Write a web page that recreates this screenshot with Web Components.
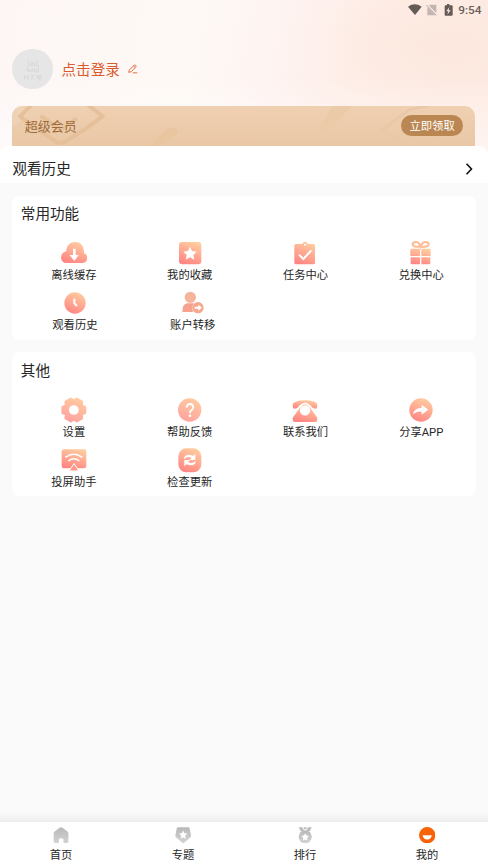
<!DOCTYPE html>
<html lang="zh-CN">
<head>
<meta charset="utf-8">
<title>我的</title>
<style>
html,body{margin:0;height:100%}
body{font-family:Roboto,"Noto Sans CJK SC",sans-serif;color:#262626;background:#fafafa;overflow:hidden}
</style>
</head>
<body>
<app-shell>
  <profile-header>
    <status-bar slot="status">9:54</status-bar>
    <user-row>点击登录</user-row>
    <vip-card action="立即领取">超级会员</vip-card>
  </profile-header>
  <history-row>观看历史</history-row>
  <menu-panel heading="常用功能">
    <menu-item icon="cloud">离线缓存</menu-item>
    <menu-item icon="star">我的收藏</menu-item>
    <menu-item icon="task">任务中心</menu-item>
    <menu-item icon="gift">兑换中心</menu-item>
    <menu-item icon="clock" style="margin-left:2px">观看历史</menu-item>
    <menu-item icon="transfer" style="margin-left:6px">账户转移</menu-item>
  </menu-panel>
  <menu-panel heading="其他">
    <menu-item icon="gear">设置</menu-item>
    <menu-item icon="help">帮助反馈</menu-item>
    <menu-item icon="phone">联系我们</menu-item>
    <menu-item icon="share">分享APP</menu-item>
    <menu-item icon="cast">投屏助手</menu-item>
    <menu-item icon="update">检查更新</menu-item>
  </menu-panel>
  <tab-bar slot="tabs">
    <tab-item icon="home">首页</tab-item>
    <tab-item icon="topic">专题</tab-item>
    <tab-item icon="rank">排行</tab-item>
    <tab-item icon="mine">我的</tab-item>
  </tab-bar>
</app-shell>
<script>
function define(name, render) {
  customElements.define(name, class extends HTMLElement {
    constructor() {
      super();
      this.attachShadow({ mode: 'open' });
    }
    connectedCallback() {
      this.shadowRoot.innerHTML = render(this);
    }
  });
}

define('app-shell', () => `
<style>
:host{display:flex;flex-direction:column;height:867px;width:488px;background:#fafafa}
main{flex:1;min-height:0;display:flex;flex-direction:column}
</style><main><slot></slot></main><slot name="tabs"></slot>`);

define('profile-header', () => `
<style>
:host{display:flex;flex-direction:column;height:154px;margin-bottom:-8px;flex:none;
background:linear-gradient(180deg,transparent 50%,rgba(255,255,255,.5)),
radial-gradient(ellipse 130px 80px at 445px 45px,#fce8de,transparent),
linear-gradient(100deg,#fdf6f5 0%,#fef9f5 38%,#fef4f2 54%,#feeee8 70%,#feebe4 100%)}
</style><slot name="status"></slot><slot></slot>`);

define('status-bar', () => `
<style>
:host{display:flex;height:20px;align-items:center;justify-content:flex-end;padding-right:6.5px;font:500 11.8px/20px Roboto,sans-serif;color:#6b605c}
svg{margin-right:4.6px;margin-top:-1px}
</style>
<svg width="46" height="14" viewBox="0 0 138 42"><path d="M0 11Q20-3 41 11L21 36Z" fill="#645b57"/>
<path d="M64 5h21v25L64 9ZM58 12l25 25H58Z" fill="#c3b6b1"/><path d="m55 6 30 31" stroke="#b9aca7" stroke-width="3"/>
<path d="M117 3h7v4h7q3 0 3 3v25q0 3-3 3h-18q-3 0-3-3V10q0-3 3-3h4Z" fill="#645b57"/><path d="m124 12-9 13h6l-3 10 10-13h-6Z" fill="#fbe9e3"/></svg><slot></slot>`);

define('user-row', () => `
<style>
:host{display:flex;align-items:center;height:41px;margin-top:28.5px;padding-left:12.4px;color:#dc5b2e;font-size:14.6px;line-height:20px}
.avatar{width:40.5px;height:40.5px;border-radius:50%;background:#e6e6e6;margin-right:8.6px;flex:none}
.edit{margin-left:8px}
span{padding-top:1.4px}
</style>
<svg class="avatar" viewBox="0 0 122 122" fill="none" stroke="#d6d6d6" stroke-width="2.5">
<path d="m47 34 4 11h24l4-11M56 35l7 9 7-9M46 49h34v7M46 54v14M48 58l4 11 4-8 4 8 4-11M68 58v11h6V58M79 56v14M38 79v14M43 82l-7 5M47 79v14M47 85l5 2M56 80h12M62 80l-5 13M61 86l7 6M74 80h14v5H74ZM78 88h7v7M81 85v11"/></svg>
<span><slot></slot></span>
<svg class="edit" width="10" height="10" viewBox="0 0 30 30" fill="none" stroke="#e0673d" stroke-width="2.8"><path d="m4 18 15-15q2-1 4 1t1 4L10 23l-8 2ZM16 6l6 5M14 26.5h14"/></svg>`);

define('vip-card', el => `
<style>
:host{display:flex;position:relative;overflow:hidden;align-items:center;justify-content:space-between;box-sizing:border-box;height:41px;margin:16.3px 12.6px 0 12.4px;padding:0 12.3px;border-radius:10px 10px 0 0;background:linear-gradient(180deg,#efd0b1,#e9c7a6);color:#9b6b3b;font-size:13px;line-height:18px}
.art{position:absolute;inset:0}
span{position:relative;margin-top:1px}
b{position:relative;box-sizing:border-box;font-weight:400;font-size:11.3px;line-height:20px;height:20.6px;padding:1.4px 8.4px 0;border-radius:11px;background:#ba8752;color:#fff;margin-top:-1.4px}
</style>
<svg class="art" width="463" height="41" viewBox="0 0 1389 123" fill="none" stroke-linecap="round" stroke-linejoin="round">
<path d="M0 0h70L20 50 0 60Z" fill="#f0d5bb" opacity=".6"/>
<path d="M70-14 24 31q44 34 108 76 14 8 28 0 60-36 112-76L214-14M90 33l50 33q8 4 16 0l34-26" stroke="#e5c09a" stroke-width="12"/>
<path d="m410 123 46-48q20-16 40-6 8 9-12 23l-44 31Z" fill="#e9c6a0"/>
<path d="m918 65 45-65h56l-60 65q-25 18-41 0" fill="#ebcaa8"/>
<path d="m1250-2-58 13-80 60 90 62M1230 45l-60 29 60 40 90-45" stroke="#e8c8a7" stroke-width="8"/>
</svg><span><slot></slot></span><b>${el.getAttribute('action')}</b>`);

define('history-row', () => `
<style>
:host{display:flex;position:relative;flex:none;box-sizing:border-box;height:37px;align-items:center;justify-content:space-between;background:#fff;border-radius:9px 9px 0 0;padding:9px 15px 0 12.4px;font-size:14.6px;line-height:20px}
</style><slot></slot><svg width="8" height="12" viewBox="0 0 8 12" fill="none" stroke="#111" stroke-width="1.6"><path d="m1.5.8 5 5.2-5 5.2"/></svg>`);

define('menu-panel', el => `
<style>
:host{display:flex;flex-direction:column;flex:none;box-sizing:border-box;height:144.2px;margin:12.5px 12.5px 0 12.4px;padding-top:8.6px;background:#fff;border-radius:8px}
:host(:last-of-type){padding-top:9.1px}
h2{font-size:14.6px;line-height:20px;font-weight:400;margin:0 0 15.9px 8.4px}
.grid{display:grid;grid-template-columns:repeat(4,115.8px);row-gap:7.4px;margin-left:3.6px}
</style><h2>${el.getAttribute('heading')}</h2><div class="grid"><slot></slot></div>`);

/* Menu glyphs are drawn on a 78-unit square; "F" and "G" stand for the strong and soft warm gradients. */
const ICONS = {
  cloud: `<path d="M17 69Q1 68 0 53q0-14 15-19Q17 8 41 6q26 0 28 28v6q9 2 10 13 0 14-13 16Z" fill="F"/><path d="M36 26h8v19h9L40 63 26 45h10Z" fill="#fff"/>`,
  star: `<rect x="6" y="6" width="67" height="67" rx="10" fill="F"/><path d="m39 20 6 13 14 2-10 10 3 14-13-7-13 7 3-14-10-10 14-2Z" fill="#fff"/>`,
  task: `<path d="M12 12h19q2-7 8-7t8 7h17q5 0 5 5v51q0 5-5 5H12q-5 0-5-5V17q0-5 5-5Z" fill="F"/><circle cx="39" cy="14" r="3" fill="#fff"/><path d="m21 44 13 13 24-26" fill="none" stroke="#fff" stroke-width="6"/>`,
  gift: `<path d="M38 20Q33 5 22 6q-8 1-8 7t9 7h30q9-1 9-7t-8-7Q43 5 38 20Z" fill="none" stroke="#ffbc94" stroke-width="6"/><path d="M11 26h25v22H7V30q0-4 4-4M40 26h24q4 0 4 4v18H40ZM8 52h28v21H12q-4 0-4-4ZM40 52h27v17q0 4-4 4H40Z" fill="F"/>`,
  clock: `<circle cx="39" cy="39" r="32" fill="F"/><path d="M37 26v14l8 8" fill="none" stroke="#fff" stroke-width="6"/>`,
  transfer: `<circle cx="31" cy="22" r="17" fill="#f4b59b"/><path d="M7 66q0-26 16-26h19q-8 9-3 26Z" fill="#f5a28e"/><circle cx="54" cy="53" r="17" fill="#f8a78f"/><path d="M44 50h11v-6l11 9-11 9v-6H44Z" fill="#fff"/>`,
  gear: `<path d="M72.3 29.9v18.2L61.9 52.5l1.3 11.2-15.6 9.1L38.5 66l-9.1 6.8-15.6-9.1 1.3-11.2-10.4-4.4V29.9l10.4-4.4-1.3-11.2 15.6-9.1 9.1 6.8 9.1-6.8 15.6 9.1-1.3 11.2Z" fill="G" stroke="G" stroke-width="7" stroke-linejoin="round"/><circle cx="38.5" cy="39" r="14.5" fill="#fff"/>`,
  help: `<circle cx="38" cy="39" r="35" fill="G"/><path d="M29 32q1-11 10-11t10 10q0 6-6 9-4 3-4 9" fill="none" stroke="#fff" stroke-width="5.5"/><circle cx="39" cy="56" r="3.8" fill="#fff"/>`,
  phone: `<path d="M2 24q0-7 9-10 28-8 56 0 9 3 9 10 0 12-6 11-9 0-13-8-18-21-36 0-4 8-13 8-6 1-6-11" fill="F"/><path d="M24 32q15-21 30 0l21 29q4 14-8 14H11q-12 0-8-14Z" fill="F"/><circle cx="39" cy="40" r="15.5" fill="#fff"/>`,
  share: `<circle cx="39" cy="39" r="35" fill="F"/><path d="M41 23 61 38 41 53v-9q-15-3-26 8 4-20 26-20Z" fill="#fff"/>`,
  cast: `<path d="M10 7h59q7 0 7 7v43q0 7-7 7H9q-7 0-7-7V14q0-7 8-7" fill="F"/><path d="M13 31q25-18 51 0M22 42q17-13 33 0" fill="none" stroke="#fff" stroke-width="4.5"/><path d="m39 50 15 22H24Z" fill="#ff9886" stroke="#fff" stroke-width="3"/>`,
  update: `<rect x="4" y="4" width="69" height="72" rx="24" fill="F"/><path d="M20 37q1-14 17-14l12 3 6-6v19H37l7-6q-11-8-24 4M57 41q-1 14-17 14l-12-3-6 6V39h18l-7 6q11 8 24-4" fill="#fff"/>`
};

define('menu-item', el => `
<style>
:host{display:flex;flex-direction:column;align-items:center;height:42.6px;font-size:11.3px;line-height:17px;white-space:nowrap}
svg{width:26px;height:26px;flex:none;margin-bottom:1px}
</style>
<svg viewBox="0 0 78 78"><defs>
<linearGradient id="w" x1=".7" y1="0" x2=".3" y2="1"><stop stop-color="#ffcda0"/><stop offset="1" stop-color="#ff8583"/></linearGradient>
<linearGradient id="s" x1=".7" y1="0" x2=".3" y2="1"><stop stop-color="#ffcb9f"/><stop offset="1" stop-color="#ffa2a0"/></linearGradient>
</defs>${ICONS[el.getAttribute('icon')].replaceAll('"F"', '"url(#w)"').replaceAll('"G"', '"url(#s)"')}</svg><slot></slot>`);

define('tab-bar', () => `
<style>
:host{display:grid;grid-template-columns:repeat(4,1fr);position:relative;flex:none;height:45.3px;background:#fff}
:host::before{content:"";position:absolute;left:0;right:0;top:-9px;height:9px;background:linear-gradient(#fafafa,#ececec)}
</style><slot></slot>`);

const TABS = {
  home: `<path d="M20 2q5-3 9 0l15 12q3 3 3 6v24q0 5-5 5H32V38q-1-4-7-4t-7 4v11H7q-5 0-5-5V20q0-4 3-6Z" fill="url(#g)"/>`,
  topic: `<path d="M10 1h30q4 0 5 4l4 22q0 3-3 5L28 48q-3 2-6 0L4 32q-3-2-3-5L5 5q1-4 5-4Z" fill="url(#g)"/><path d="m25 11 4 8 9 1-7 7 2 9-8-4-8 4 2-9-7-7 9-1Z" fill="#fff"/>`,
  rank: `<path d="M5 1h11l6 10-10 3ZM45 1H34l-6 10 10 3ZM20 1h10l-2 6h-6Z" fill="#bbb"/><circle cx="25" cy="30" r="20" fill="url(#g)"/><path d="m25 19 4 7 8 1-6 6 1 8-7-3-7 3 1-8-6-6 8-1Z" fill="#fff"/>`,
  mine: `<circle cx="25" cy="25" r="25" fill="#fa6208"/><path d="M11 25h28q-2 13-14 13T11 25" fill="#fff"/>`
};

define('tab-item', el => `
<style>
:host{display:flex;flex-direction:column;align-items:center;padding-top:5px;font-size:11.3px;line-height:17px}
svg{width:16.4px;height:16.4px;margin:0 .4px 4.2px 0}
</style>
<svg viewBox="0 0 50 50"><defs><linearGradient id="g" x1="0" y1="0" x2="0" y2="1"><stop stop-color="#b8b8b8"/><stop offset="1" stop-color="#d3d3d3"/></linearGradient></defs>${TABS[el.getAttribute('icon')]}</svg><slot></slot>`);
</script>
</body>
</html>
